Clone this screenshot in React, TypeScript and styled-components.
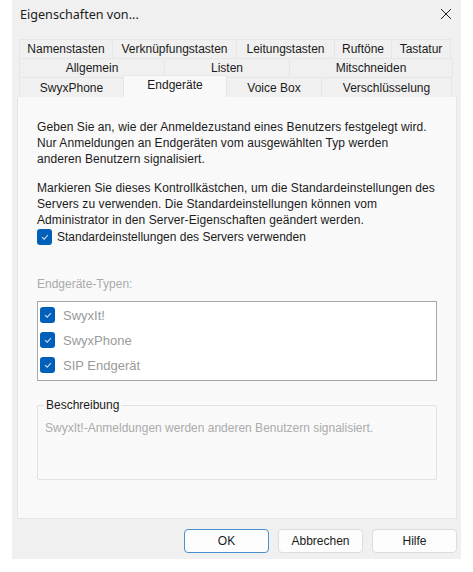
import React from "react";
import styled, { createGlobalStyle } from "styled-components";

const GlobalStyle = createGlobalStyle`
  html, body {
    margin: 0;
    padding: 0;
    background: #ffffff;
  }
  body {
    font-family: "Liberation Sans", Arial, sans-serif;
    font-size: 12px;
    color: #1b1b1b;
  }
`;

type Tab = { label: string; width: number; active?: boolean };

const tabRows: Tab[][] = [
  [
    { label: "Namenstasten", width: 94 },
    { label: "Verknüpfungstasten", width: 125 },
    { label: "Leitungstasten", width: 99 },
    { label: "Ruftöne", width: 58 },
    { label: "Tastatur", width: 60 },
  ],
  [
    { label: "Allgemein", width: 146 },
    { label: "Listen", width: 126 },
    { label: "Mitschneiden", width: 164 },
  ],
  [
    { label: "SwyxPhone", width: 105 },
    { label: "Endgeräte", width: 104, active: true },
    { label: "Voice Box", width: 96 },
    { label: "Verschlüsselung", width: 131 },
  ],
];

const deviceTypes = ["SwyxIt!", "SwyxPhone", "SIP Endgerät"];

const CheckBox: React.FC = () => (
  <Box>
    <svg width="10" height="10" viewBox="0 0 10 10">
      <path d="M2 5.2 L4.2 7.2 L8 3" fill="none" stroke="#cfe0f3" strokeWidth="1.1" />
    </svg>
  </Box>
);

const App: React.FC = () => {
  return (
    <>
      <GlobalStyle />
      <Window>
        <TitleBar>
          <Title>Eigenschaften von...</Title>
          <Close>
            <svg width="12" height="12" viewBox="0 0 12 12">
              <path d="M1 1 L11 11 M11 1 L1 11" stroke="#1b1b1b" strokeWidth="1" />
            </svg>
          </Close>
        </TitleBar>
        <Tabs>
          {tabRows.map((row, i) => (
            <TabRow key={i} $last={i === tabRows.length - 1}>
              {row.map((tab) => (
                <TabItem key={tab.label} $w={tab.width} $active={!!tab.active}>
                  {tab.label}
                </TabItem>
              ))}
            </TabRow>
          ))}
        </Tabs>
        <Panel>
          <Para>
            Geben Sie an, wie der Anmeldezustand eines Benutzers festgelegt wird.
            <br />
            Nur Anmeldungen an Endgeräten vom ausgewählten Typ werden
            <br />
            anderen Benutzern signalisiert.
          </Para>
          <Para $top={13}>
            Markieren Sie dieses Kontrollkästchen, um die Standardeinstellungen des
            <br />
            Servers zu verwenden. Die Standardeinstellungen können vom
            <br />
            Administrator in den Server-Eigenschaften geändert werden.
          </Para>
          <CheckRow>
            <CheckBox />
            <span>Standardeinstellungen des Servers verwenden</span>
          </CheckRow>
          <Caption>Endgeräte-Typen:</Caption>
          <List>
            {deviceTypes.map((t) => (
              <ListItem key={t}>
                <CheckBox />
                <span>{t}</span>
              </ListItem>
            ))}
          </List>
          <Group>
            <GroupLegend>Beschreibung</GroupLegend>
            <GroupText>SwyxIt!-Anmeldungen werden anderen Benutzern signalisiert.</GroupText>
          </Group>
        </Panel>
        <Footer>
          <Button $primary>OK</Button>
          <Button>Abbrechen</Button>
          <Button>Hilfe</Button>
        </Footer>
      </Window>
    </>
  );
};

const Window = styled.div`
  margin-left: 12px;
  width: 449px;
  height: 559px;
  background: #f0f0f0;
  display: flex;
  flex-direction: column;
  box-sizing: border-box;
`;

const TitleBar = styled.div`
  height: 28px;
  display: flex;
  align-items: center;
  justify-content: space-between;
  padding: 0 9px 0 8px;
`;

const Title = styled.span`
  font-family: "Noto Sans", "Open Sans", sans-serif;
  font-size: 12.6px;
  color: #1b1b1b;
`;

const Close = styled.span`
  display: flex;
  align-items: center;
  width: 12px;
  height: 12px;
`;

const Tabs = styled.div`
  margin: 11px 6px 0 7px;
  display: flex;
  flex-direction: column;
`;

const TabRow = styled.div<{ $last: boolean }>`
  display: flex;
  height: ${(p) => (p.$last ? 20 : 19)}px;
`;

const TabItem = styled.div<{ $w: number; $active: boolean }>`
  width: ${(p) => p.$w}px;
  box-sizing: border-box;
  display: flex;
  align-items: center;
  justify-content: center;
  border: 1px solid #e6e6e6;
  border-bottom: none;
  margin-left: -1px;
  &:first-child {
    margin-left: 0;
  }
  background: ${(p) => (p.$active ? "#f9f9f9" : "#f0f0f0")};
  color: #1b1b1b;
  font-size: 12px;
  white-space: nowrap;
  ${(p) =>
    p.$active &&
    `
    margin-top: -2px;
    height: 22px;
    padding-bottom: 4px;
    position: relative;
    z-index: 1;
  `}
`;

const Panel = styled.div`
  margin: 0 4px 0 5px;
  height: 422px;
  box-sizing: border-box;
  background: #f9f9f9;
  border: 1px solid #e6e6e6;
  border-top: none;
  padding: 22px 19px 0 19px;
  display: flex;
  flex-direction: column;
`;

const Para = styled.p<{ $top?: number }>`
  margin: ${(p) => p.$top || 0}px 0 0 0;
  line-height: 16px;
  font-size: 12px;
  letter-spacing: 0.08px;
  color: #1b1b1b;
`;

const Box = styled.span`
  width: 15px;
  height: 16px;
  border-radius: 3px;
  background: #005fb8;
  display: inline-flex;
  align-items: center;
  justify-content: center;
  flex-shrink: 0;
`;

const CheckRow = styled.div`
  display: flex;
  align-items: center;
  gap: 5px;
  height: 16px;
  margin-top: 1px;
`;

const Caption = styled.div`
  margin-top: 31px;
  line-height: 16px;
  color: #ababab;
`;

const List = styled.div`
  margin-top: 9px;
  height: 80px;
  box-sizing: border-box;
  background: #ffffff;
  border: 1px solid #a8a8a8;
  padding: 5px 0 0 2px;
  display: flex;
  flex-direction: column;
  gap: 9px;
  color: #9a9a9a;
  font-size: 13px;
`;

const ListItem = styled.div`
  display: flex;
  align-items: center;
  gap: 8px;
  height: 16px;
`;

const Group = styled.div`
  margin-top: 24px;
  height: 75px;
  box-sizing: border-box;
  border: 1px solid #e2e2e2;
  border-radius: 2px;
  position: relative;
  padding: 14px 7px 0 7px;
`;

const GroupLegend = styled.span`
  position: absolute;
  top: -9px;
  left: 6px;
  padding: 0 2px;
  background: #f9f9f9;
  color: #1b1b1b;
  font-size: 12px;
  line-height: 16px;
`;

const GroupText = styled.div`
  color: #ababab;
  line-height: 16px;
`;

const Footer = styled.div`
  display: flex;
  justify-content: flex-end;
  gap: 9px;
  padding: 10px 4px 0 0;
`;

const Button = styled.button<{ $primary?: boolean }>`
  width: 85px;
  height: 24px;
  box-sizing: border-box;
  background: #fdfdfd;
  border: 1px solid ${(p) => (p.$primary ? "#4a90d0" : "#dcdcdc")};
  border-radius: 4px;
  font-family: "Liberation Sans", Arial, sans-serif;
  font-size: 12px;
  color: #1b1b1b;
  padding: 0;
`;

export default App;
